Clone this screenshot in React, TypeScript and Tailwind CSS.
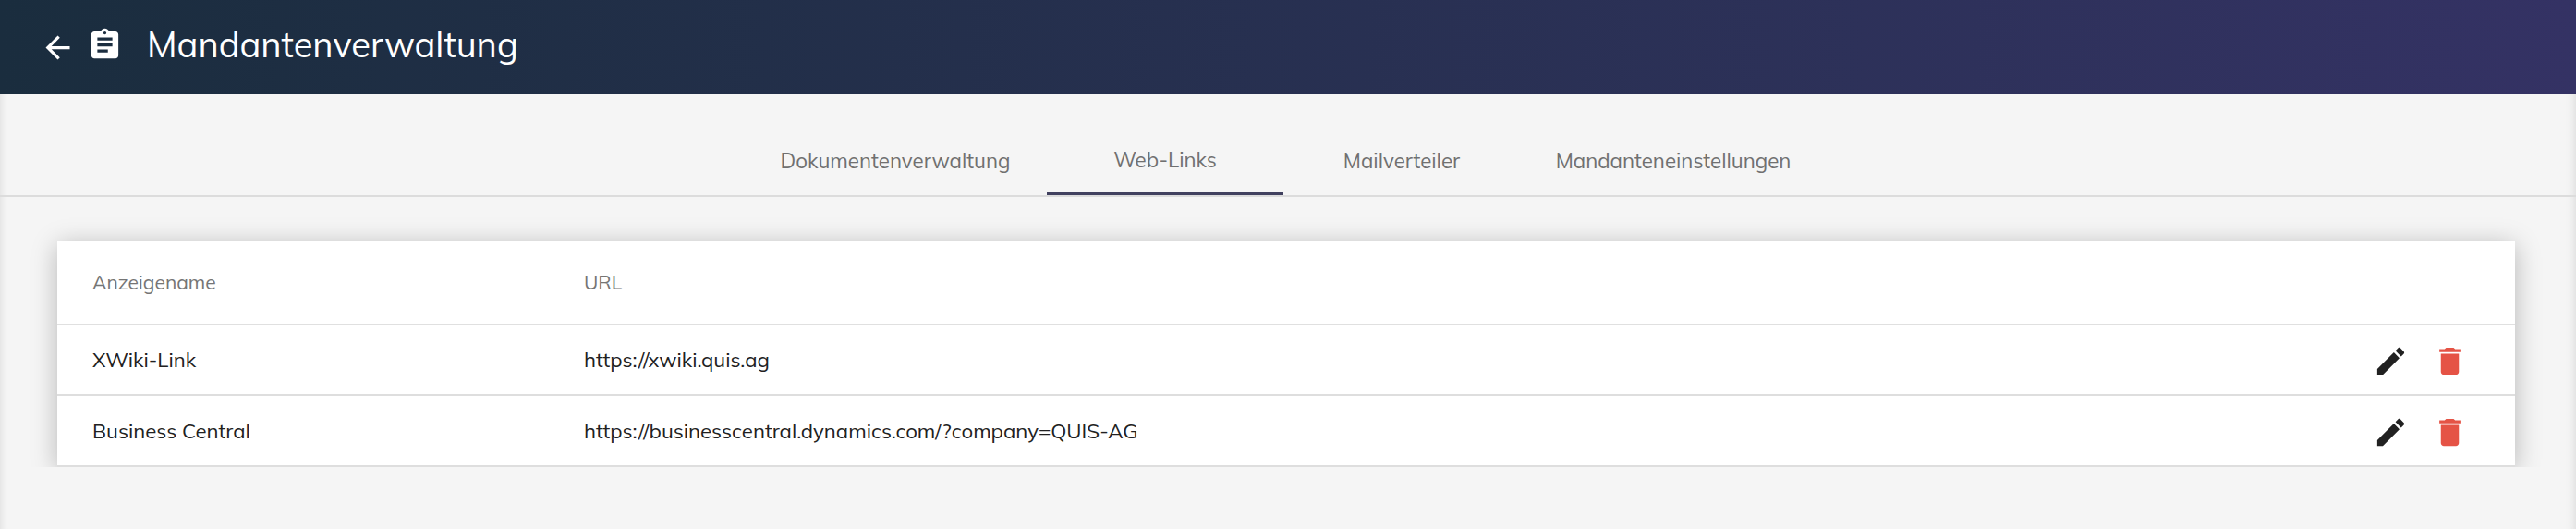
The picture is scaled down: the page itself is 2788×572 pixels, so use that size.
const tabs = [
  { label: "Dokumentenverwaltung", width: "w-[328px]" },
  { label: "Web-Links", width: "w-[256px]", active: true },
  { label: "Mailverteiler", width: "w-[256px]" },
  { label: "Mandanteneinstellungen", width: "w-[332px]" },
];

const links = [
  { name: "XWiki-Link", url: "https://xwiki.quis.ag" },
  { name: "Business Central", url: "https://businesscentral.dynamics.com/?company=QUIS-AG" },
];

function BackIcon() {
  return (
    <svg viewBox="0 0 24 24" className="h-[39px] w-[39px] fill-white">
      <path d="M20 11H7.83l5.59-5.59L12 4l-8 8 8 8 1.41-1.41L7.83 13H20v-2z" />
    </svg>
  );
}

function AssignmentIcon() {
  return (
    <svg viewBox="0 0 24 24" className="h-[39px] w-[39px] fill-white">
      <path d="M19 3h-4.18C14.4 1.84 13.3 1 12 1c-1.3 0-2.4.84-2.82 2H5c-1.1 0-2 .9-2 2v14c0 1.1.9 2 2 2h14c1.1 0 2-.9 2-2V5c0-1.1-.9-2-2-2zm-7 0c.55 0 1 .45 1 1s-.45 1-1 1-1-.45-1-1 .45-1 1-1zm2 14H7v-2h7v2zm3-4H7v-2h10v2zm0-4H7V7h10v2z" />
    </svg>
  );
}

function EditIcon() {
  return (
    <svg viewBox="0 0 24 24" className="h-[39px] w-[39px] fill-[#212121]">
      <path d="M3 17.25V21h3.75L17.81 9.94l-3.75-3.75L3 17.25zM20.71 7.04c.39-.39.39-1.02 0-1.41l-2.34-2.34c-.39-.39-1.02-.39-1.41 0l-1.83 1.83 3.75 3.75 1.83-1.83z" />
    </svg>
  );
}

function TrashIcon() {
  return (
    <svg viewBox="0 0 24 24" className="h-[39px] w-[39px] fill-[#e55345]">
      <path d="M6 19c0 1.1.9 2 2 2h8c1.1 0 2-.9 2-2V7H6v12zM19 4h-3.5l-1-1h-5l-1 1H5v2h14V4z" />
    </svg>
  );
}

export default function App() {
  return (
    <div className="flex h-[572px] w-[2788px] flex-col bg-[#f5f5f5] font-['Mulish','Noto_Sans',sans-serif]">
      <header className="flex h-[102px] items-center bg-gradient-to-r from-[#1a2d3e] to-[#343264] pl-[43px]">
        <BackIcon />
        <span className="ml-[12px] -mt-[6px]">
          <AssignmentIcon />
        </span>
        <h1 className="ml-[26px] -mt-[5px] text-[38px] font-normal text-white">Mandantenverwaltung</h1>
      </header>

      <main className="flex-1 shadow-[inset_10px_0_10px_-10px_rgba(0,0,0,0.12),inset_-12px_0_12px_-12px_rgba(0,0,0,0.14)]">
        <nav className="flex h-[111px] items-end justify-center border-b-2 border-[#dcdcdc] pr-[6px]">
          {tabs.map((tab) => (
            <div
              key={tab.label}
              className={`flex h-[72px] ${tab.width} items-center justify-center text-[22.3px] text-[#707070] ${
                tab.active ? "border-b-[3px] border-[#41415f]" : ""
              }`}
            >
              {tab.label}
            </div>
          ))}
        </nav>

        <div className="h-[292px] overflow-hidden pt-[48px] pr-[66px] pl-[62px]">
          <div className="h-[244px] bg-white shadow-[0_4px_26px_rgba(0,0,0,0.26)]">
            <div className="flex h-[90px] items-center border-b border-[#e0e0e0] pt-[1px] text-[21px] text-[#757575]">
              <div className="w-[570px] pl-[38px]">Anzeigename</div>
              <div>URL</div>
            </div>
            {links.map((link) => (
              <div key={link.name} className="flex h-[77px] items-center border-b-2 border-[#dedede] pt-[2px] text-[22.2px] text-[#212121]">
                <div className="w-[570px] pl-[38px]">{link.name}</div>
                <div className="flex-1">{link.url}</div>
                <div className="mt-[2px] mr-[51px] flex gap-[25px]">
                  <EditIcon />
                  <TrashIcon />
                </div>
              </div>
            ))}
          </div>
        </div>
      </main>
    </div>
  );
}
